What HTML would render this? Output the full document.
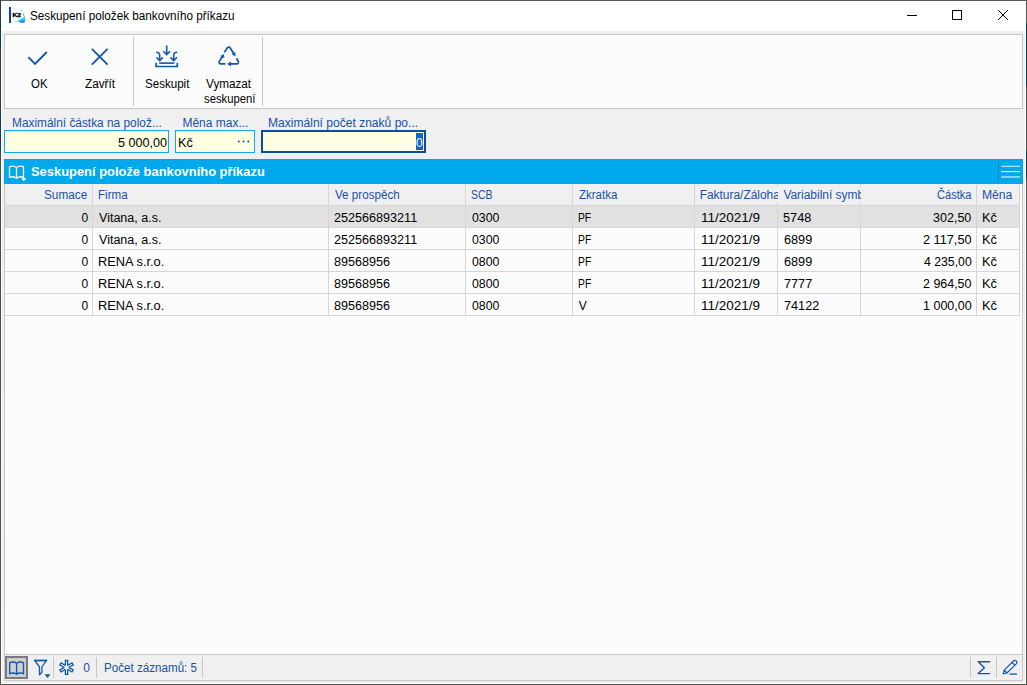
<!DOCTYPE html>
<html lang="cs">
<head>
<meta charset="utf-8">
<title>Seskupení položek bankovního příkazu</title>
<style>
html,body{margin:0;padding:0;}
body{width:1027px;height:685px;position:relative;overflow:hidden;background:#f0f0f0;font-family:"Liberation Sans",sans-serif;font-size:12px;}
.a{position:absolute;}
.t{position:absolute;white-space:pre;line-height:16px;height:16px;transform-origin:0 0;}
svg{position:absolute;overflow:visible;}
.vl{position:absolute;width:1px;background:#d6d6d6;}
.hl{position:absolute;height:1px;background:#d6d6d6;}
.sep{position:absolute;width:1px;background:#c8c8c8;}
</style>
</head>
<body>
<!-- window frame -->
<div class="a" style="left:0;top:0;width:1027px;height:685px;background:#fff;"></div>
<div class="a" style="left:2px;top:31px;width:1023px;height:652px;background:#f0f0f0;"></div>
<div class="a" style="left:0;top:0;width:1027px;height:1px;background:#5a5a5a;"></div>
<div class="a" style="left:0;top:0;width:1px;height:685px;background:linear-gradient(#2a3c4c 0,#2a3c4c 20px,#0e3d56 21px,#0e3d56 47px,#3c3c3c 48px,#3c3c3c 112px,#0e3d56 113px,#0e3d56 150px,#4a4a44 151px,#55554d 100%);"></div>
<div class="a" style="left:1026px;top:0;width:1px;height:685px;background:linear-gradient(#555 0,#555 22px,#0d3b52 23px,#0d3b52 85px,#4a4a4a 86px,#4a4a4a 150px,#0d3b52 151px,#0d3b52 179px,#555 180px,#55554d 100%);"></div>
<div class="a" style="left:0;top:684px;width:1027px;height:1px;background:#55554d;"></div>

<!-- app icon -->
<div class="a" style="left:9px;top:7px;width:2px;height:16px;background:#0e47a0;"></div>
<svg style="left:11px;top:7px" width="15" height="16" viewBox="0 0 15 16">
  <defs><linearGradient id="g1" x1="0.2" y1="0" x2="0.5" y2="1"><stop offset="0" stop-color="#42f8f0"/><stop offset="0.6" stop-color="#30dcf5"/><stop offset="1" stop-color="#1c6cf0"/></linearGradient></defs>
  <path d="M13.600 8C12.800 10.800 9.800 12.400 6.600 13.400C8.200 15.800 11.200 16.200 13.600 15.600C14.300 14 14.300 10 13.600 8Z" fill="url(#g1)"/>
  <path d="M3 14.5 L7 13.4 L6 15.6Z" fill="#45f0e0" opacity=".8"/>
  <path d="M12.300 5.200L13.100 8.400L11.900 8.800Z" fill="#2f7bff" opacity=".8"/><circle cx="10.600" cy="3.200" r=".7" fill="#3d7dff" opacity=".7"/>
  <text x="1.4" y="10" font-family="Liberation Sans, sans-serif" font-weight="bold" font-size="5.6" fill="#000" textLength="8.6" lengthAdjust="spacingAndGlyphs" stroke="#000" stroke-width=".3">K2</text>
</svg>

<!-- window controls -->
<svg style="left:0;top:0" width="1027" height="32" viewBox="0 0 1027 32" fill="none" stroke="#000" stroke-width="1">
  <path d="M907 15.5H917"/>
  <rect x="952.5" y="10.5" width="9" height="9"/>
  <path d="M998 10L1008 20M1008 10L998 20"/>
</svg>

<!-- toolbar panel -->
<div class="a" style="left:4px;top:34px;width:1017px;height:73px;border:1px solid #c8c8c8;background:#fcfcfc;"></div>
<div class="sep" style="left:133px;top:37px;height:69px;"></div>
<div class="sep" style="left:262px;top:37px;height:69px;"></div>
<svg style="left:0;top:0" width="280" height="110" viewBox="0 0 280 110" fill="none" stroke="#1058ae" stroke-width="1.9" stroke-linecap="butt" stroke-linejoin="miter">
  <!-- check -->
  <path d="M28.3 57.2L35 64L46.8 52"/>
  <!-- X -->
  <path d="M91.8 48.8L107.6 64.6M107.6 48.8L91.8 64.6"/>
  <!-- seskupit -->
  <path d="M156.100 62.800V66.500H177.300V62.800" stroke-width="1.7"/>
  <path d="M159.200 63.100H174.400" stroke-width="1.6"/>
  <path d="M166.7 45.6V54.2M163.300 51.200L166.700 54.600L170.100 51.200" stroke-width="1.6"/>
  <path d="M156.2 52.3C158.6 52.3 159.7 53 159.7 55.5V60.4M156.500 57.400L159.700 60.700L162.900 57.400" stroke-width="1.6"/>
  <path d="M177.2 52.3C174.8 52.3 173.7 53 173.7 55.5V60.4M176.900 57.400L173.700 60.700L170.500 57.400" stroke-width="1.6"/>
  <!-- recycle -->
  <g stroke-width="1.7" transform="translate(0 .6)">
  <path d="M224.4 51.6L227.4 47.2C228.1 46.2 229.4 46.2 230.1 47.2L233.8 53.2"/>
  <path d="M236.4 57.6L238.2 60.6C238.9 61.9 238.2 63.3 236.8 63.3H229.6"/>
  <path d="M225.4 63.3H220.8C219.4 63.3 218.7 61.9 219.4 60.6L222.6 55.6"/>
  </g>
  <g fill="#1058ae" stroke="none" transform="translate(0 .6)">
  <path d="M231.6 53.6L235.6 55.8L235.2 51.4Z"/>
  <path d="M227.2 63.3L231 60.8V65.8Z"/>
  <path d="M223.9 53.4L220.2 55.6L224.4 57.4Z"/>
  </g>
</svg>

<!-- inputs -->
<div class="a" style="left:4px;top:130px;width:163px;height:21px;border:1px solid #12a6f4;background:#ffffe1;"></div>
<div class="a" style="left:175px;top:130px;width:78px;height:21px;border:1px solid #12a6f4;background:#ffffe1;"></div>
<svg style="left:230px;top:132px" width="30" height="20" viewBox="230 132 30 20" fill="#0c4da2"><circle cx="238.800" cy="141.550" r=".95"/><circle cx="243.550" cy="141.550" r=".95"/><circle cx="248.300" cy="141.550" r=".95"/></svg>
<div class="a" style="left:261px;top:130px;width:161px;height:19px;border:2px solid #0c4da2;background:#ffffe1;"></div>
<div class="a" style="left:416px;top:133px;width:7px;height:17px;background:#0a64d2;"></div>

<!-- grid panel -->
<div class="a" style="left:4px;top:159px;width:1017px;height:495px;border:1px solid #c8c8c8;border-top:none;background:#fcfcfc;"></div>
<div class="a" style="left:4px;top:159px;width:1019px;height:25px;background:#00a9eb;"></div>
<!-- bar icons -->
<svg style="left:0;top:159px" width="1027" height="25" viewBox="0 159 1027 25" fill="none" stroke="#fff" stroke-width="1.3">
  <path d="M16.5 167.6C14.5 166 11.5 166 9.5 166.6V177.2C11.5 176.6 14.5 176.6 16.5 178.2C18.500 176.6 21.500 176.6 23.5 177.2V166.600C21.500 166 18.5 166 16.5 167.6V178.200"/>
  <path d="M21.200 178H26.400L23.800 181.500Z" fill="#fff" stroke="none"/>
  <path d="M998.5 161V182" stroke="#0b86c4" stroke-width="1"/>
  <path d="M1001.200 166.300H1020" stroke="#cdeefc" stroke-width="1.1"/><path d="M1001.200 171.600H1020" stroke="#fff" stroke-width="1.1"/><path d="M1001.200 176.950H1020" stroke="#c6ebfb" stroke-width="1.3"/>
</svg>
<!-- header -->
<div class="a" style="left:5px;top:184px;width:1015px;height:21px;background:#f0f0f0;"></div>
<div class="a" style="left:5px;top:206px;width:1014px;height:21px;background:#e1e1e1;"></div>
<div class="hl" style="left:5px;top:205px;width:1015px;"></div>
<div class="hl" style="left:5px;top:227px;width:1015px;"></div>
<div class="hl" style="left:5px;top:249px;width:1015px;"></div>
<div class="hl" style="left:5px;top:271px;width:1015px;"></div>
<div class="hl" style="left:5px;top:293px;width:1015px;"></div>
<div class="hl" style="left:5px;top:315px;width:1015px;"></div>
<div class="vl" style="left:92px;top:184px;height:132px;"></div>
<div class="vl" style="left:328px;top:184px;height:132px;"></div>
<div class="vl" style="left:465px;top:184px;height:132px;"></div>
<div class="vl" style="left:572px;top:184px;height:132px;"></div>
<div class="vl" style="left:694px;top:184px;height:132px;"></div>
<div class="vl" style="left:777px;top:184px;height:132px;"></div>
<div class="vl" style="left:860px;top:184px;height:132px;"></div>
<div class="vl" style="left:976px;top:184px;height:132px;"></div>
<div class="vl" style="left:1019px;top:184px;height:132px;"></div>

<!-- status bar -->
<div class="a" style="left:4px;top:655px;width:1017px;height:25px;border:1px solid #c8c8c8;border-top:none;background:#f0f0f0;"></div>
<div class="a" style="left:5px;top:656px;width:19px;height:19px;border:2px solid #7a7a7a;background:#d0d0d0;"></div>
<div class="sep" style="left:53px;top:657px;height:21px;"></div>
<div class="sep" style="left:96px;top:657px;height:21px;"></div>
<div class="sep" style="left:202px;top:657px;height:21px;"></div>
<div class="sep" style="left:970px;top:657px;height:21px;"></div>
<div class="sep" style="left:996px;top:657px;height:21px;"></div>
<svg style="left:0;top:655px" width="1027" height="26" viewBox="0 655 1027 26" fill="none" stroke="#1259ae" stroke-width="1.3">
  <!-- book -->
  <path d="M16.600 663.300C14.800 661.900 11.600 661.900 9.700 662.700V673.700C11.600 672.900 14.800 672.900 16.600 674.300C18.400 672.900 21.600 672.900 23.500 673.700V662.700C21.600 661.900 18.400 661.900 16.600 663.300V674.800" stroke-width="1.35"/>
  <!-- filter -->
  <path d="M34.900 660.700H46.300L41.900 667V672.200L39.500 674.800V667Z" stroke-width="1.3" stroke-linejoin="round"/><path d="M33.900 660.400H47.200" stroke-width="1.600"/>
  <path d="M44.500 674.300H50.500L47.500 677.900Z" fill="#1259ae" stroke="none"/>
  <!-- snowflake -->
  <g stroke-width="1.3" transform="translate(66.550 667.450)">
    <path id="arm" d="M-1.150 -1.950V-7H1.150V-1.950"/>
    <use href="#arm" transform="rotate(60)"/>
    <use href="#arm" transform="rotate(120)"/>
    <use href="#arm" transform="rotate(180)"/>
    <use href="#arm" transform="rotate(240)"/>
    <use href="#arm" transform="rotate(300)"/>
  </g>
  <!-- sigma -->
  <path d="M989.600 661.700H978.200L984.400 667.700L978.200 673.600H989.600" stroke-width="1.4" stroke-linejoin="round" stroke-linecap="round"/>
  <!-- pencil -->
  <path d="M1003.200 673.800L1004.200 670.200L1013.400 661C1014.200 660.200 1015.400 660.200 1016.200 661C1017 661.800 1017 663 1016.200 663.800L1007 673Z M1012 662.400L1014.800 665.200 M1004.200 670.200L1007 673" stroke-width="1.2"/>
  <path d="M1009.500 674.100H1017" stroke-width="1.3"/>
</svg>

<span class=t style="left:29.70px;top:8px;color:#000;font-size:12px;transform:scaleX(0.9768);">Seskupení položek bankovního příkazu</span>
<span class=t style="left:30.62px;top:76px;color:#000;font-size:12px;transform:scaleX(0.9509);">OK</span>
<span class=t style="left:85.37px;top:76px;color:#000;font-size:12px;transform:scaleX(0.9785);">Zavřít</span>
<span class=t style="left:145.31px;top:76px;color:#000;font-size:12px;transform:scaleX(0.9638);">Seskupit</span>
<span class=t style="left:206.20px;top:76px;color:#000;font-size:12px;transform:scaleX(0.9759);">Vymazat</span>
<span class=t style="left:203.60px;top:91px;color:#000;font-size:12px;transform:scaleX(0.9389);">seskupení</span>
<span class=t style="left:11.62px;top:115px;color:#1a50a8;font-size:12px;transform:scaleX(0.9893);">Maximální částka na polož...</span>
<span class=t style="left:182.41px;top:115px;color:#1a50a8;font-size:12px;">Měna max...</span>
<span class=t style="left:268.48px;top:115px;color:#1a50a8;font-size:12px;transform:scaleX(1.0047);">Maximální počet znaků po...</span>
<span class=t style="left:117.57px;top:135px;color:#000;font-size:12px;transform:scaleX(1.0517);">5 000,00</span>
<span class=t style="left:178.27px;top:135px;color:#000;font-size:12px;transform:scaleX(1.0614);">Kč</span>
<span class=t style="left:416.10px;top:135px;color:#fff;font-size:12px;">0</span>
<span class=t style="left:31.33px;top:164px;color:#fff;font-size:13px;transform:scaleX(0.9928);font-weight:bold;">Seskupení polože bankovního příkazu</span>
<span class=t style="left:44.41px;top:187px;color:#1a50a8;font-size:12px;transform:scaleX(0.9810);">Sumace</span>
<span class=t style="left:98.33px;top:187px;color:#1a50a8;font-size:12px;transform:scaleX(0.9644);">Firma</span>
<span class=t style="left:335.17px;top:187px;color:#1a50a8;font-size:12px;transform:scaleX(0.9702);">Ve prospěch</span>
<span class=t style="left:470.90px;top:187px;color:#1a50a8;font-size:12px;transform:scaleX(0.8703);">SCB</span>
<span class=t style="left:579.08px;top:187px;color:#1a50a8;font-size:12px;transform:scaleX(0.9577);">Zkratka</span>
<span class=t style="left:699.70px;top:187px;color:#1a50a8;font-size:12px;letter-spacing:-0.038px;width:78.3px;overflow:hidden;background:#f0f0f0;height:15px;">Faktura/Záloha</span>
<span class=t style="left:783.40px;top:187px;color:#1a50a8;font-size:12px;letter-spacing:-0.029px;width:77.6px;overflow:hidden;background:#f0f0f0;height:15px;">Variabilní symb</span>
<span class=t style="left:936.54px;top:187px;color:#1a50a8;font-size:12px;transform:scaleX(0.9230);">Částka</span>
<span class=t style="left:981.80px;top:187px;color:#1a50a8;font-size:12px;transform:scaleX(1.0117);">Měna</span>
<span class=t style="left:81.40px;top:210px;color:#000;font-size:12px;">0</span>
<span class=t style="left:98.61px;top:210px;color:#000;font-size:12px;transform:scaleX(1.0437);">Vitana, a.s.</span>
<span class=t style="left:334.23px;top:210px;color:#000;font-size:12px;transform:scaleX(1.0505);">252566893211</span>
<span class=t style="left:471.85px;top:210px;color:#000;font-size:12px;transform:scaleX(1.0285);">0300</span>
<span class=t style="left:577.89px;top:210px;color:#000;font-size:12px;transform:scaleX(0.8588);">PF</span>
<span class=t style="left:701.05px;top:210px;color:#000;font-size:12px;transform:scaleX(1.1239);">11/2021/9</span>
<span class=t style="left:783.11px;top:210px;color:#000;font-size:12px;transform:scaleX(1.0587);">5748</span>
<span class=t style="left:932.91px;top:210px;color:#000;font-size:12px;transform:scaleX(1.0441);">302,50</span>
<span class=t style="left:981.89px;top:210px;color:#000;font-size:12px;transform:scaleX(1.0688);">Kč</span>
<span class=t style="left:81.40px;top:232px;color:#000;font-size:12px;">0</span>
<span class=t style="left:98.61px;top:232px;color:#000;font-size:12px;transform:scaleX(1.0436);">Vitana, a.s.</span>
<span class=t style="left:334.23px;top:232px;color:#000;font-size:12px;transform:scaleX(1.0506);">252566893211</span>
<span class=t style="left:471.86px;top:232px;color:#000;font-size:12px;transform:scaleX(1.0281);">0300</span>
<span class=t style="left:577.88px;top:232px;color:#000;font-size:12px;transform:scaleX(0.8592);">PF</span>
<span class=t style="left:701.04px;top:232px;color:#000;font-size:12px;transform:scaleX(1.1241);">11/2021/9</span>
<span class=t style="left:783.51px;top:232px;color:#000;font-size:12px;transform:scaleX(1.0566);">6899</span>
<span class=t style="left:923.40px;top:232px;color:#000;font-size:12px;transform:scaleX(1.0595);">2 117,50</span>
<span class=t style="left:981.88px;top:232px;color:#000;font-size:12px;transform:scaleX(1.0704);">Kč</span>
<span class=t style="left:81.40px;top:254px;color:#000;font-size:12px;">0</span>
<span class=t style="left:98.09px;top:254px;color:#000;font-size:12px;transform:scaleX(1.0686);">RENA s.r.o.</span>
<span class=t style="left:334.33px;top:254px;color:#000;font-size:12px;transform:scaleX(1.0488);">89568956</span>
<span class=t style="left:471.86px;top:254px;color:#000;font-size:12px;transform:scaleX(1.0281);">0800</span>
<span class=t style="left:577.88px;top:254px;color:#000;font-size:12px;transform:scaleX(0.8592);">PF</span>
<span class=t style="left:701.04px;top:254px;color:#000;font-size:12px;transform:scaleX(1.1241);">11/2021/9</span>
<span class=t style="left:783.51px;top:254px;color:#000;font-size:12px;transform:scaleX(1.0566);">6899</span>
<span class=t style="left:923.95px;top:254px;color:#000;font-size:12px;transform:scaleX(1.0217);">4 235,00</span>
<span class=t style="left:981.88px;top:254px;color:#000;font-size:12px;transform:scaleX(1.0704);">Kč</span>
<span class=t style="left:81.40px;top:276px;color:#000;font-size:12px;">0</span>
<span class=t style="left:98.09px;top:276px;color:#000;font-size:12px;transform:scaleX(1.0686);">RENA s.r.o.</span>
<span class=t style="left:334.33px;top:276px;color:#000;font-size:12px;transform:scaleX(1.0488);">89568956</span>
<span class=t style="left:471.86px;top:276px;color:#000;font-size:12px;transform:scaleX(1.0281);">0800</span>
<span class=t style="left:577.88px;top:276px;color:#000;font-size:12px;transform:scaleX(0.8592);">PF</span>
<span class=t style="left:701.04px;top:276px;color:#000;font-size:12px;transform:scaleX(1.1241);">11/2021/9</span>
<span class=t style="left:783.59px;top:276px;color:#000;font-size:12px;transform:scaleX(1.0555);">7777</span>
<span class=t style="left:923.45px;top:276px;color:#000;font-size:12px;transform:scaleX(1.0370);">2 964,50</span>
<span class=t style="left:981.88px;top:276px;color:#000;font-size:12px;transform:scaleX(1.0704);">Kč</span>
<span class=t style="left:81.40px;top:298px;color:#000;font-size:12px;">0</span>
<span class=t style="left:98.09px;top:298px;color:#000;font-size:12px;transform:scaleX(1.0686);">RENA s.r.o.</span>
<span class=t style="left:334.33px;top:298px;color:#000;font-size:12px;transform:scaleX(1.0488);">89568956</span>
<span class=t style="left:471.86px;top:298px;color:#000;font-size:12px;transform:scaleX(1.0281);">0800</span>
<span class=t style="left:578.76px;top:298px;color:#000;font-size:12px;">V</span>
<span class=t style="left:701.04px;top:298px;color:#000;font-size:12px;transform:scaleX(1.1241);">11/2021/9</span>
<span class=t style="left:783.64px;top:298px;color:#000;font-size:12px;transform:scaleX(1.0554);">74122</span>
<span class=t style="left:922.65px;top:298px;color:#000;font-size:12px;transform:scaleX(1.0432);">1 000,00</span>
<span class=t style="left:981.88px;top:298px;color:#000;font-size:12px;transform:scaleX(1.0704);">Kč</span>
<span class=t style="left:83.29px;top:660px;color:#1a50a8;font-size:12px;">0</span>
<span class=t style="left:103.52px;top:660px;color:#1a50a8;font-size:12px;transform:scaleX(0.9685);">Počet záznamů: 5</span>
</body>
</html>
